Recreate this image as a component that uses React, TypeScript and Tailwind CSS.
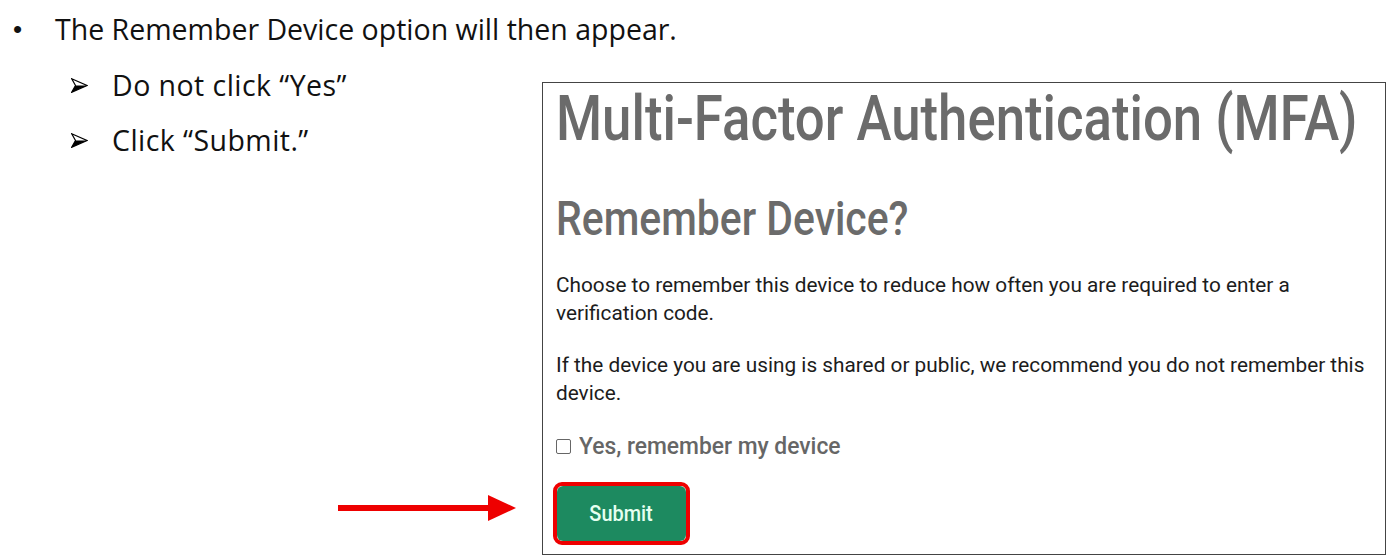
import React from 'react';

function SubArrow() {
  return (
    <svg width="17" height="15" viewBox="0 0 17 15" className="block">
      <polygon points="0.7,0.7 16,7.5 0.7,14.3 4.5,7.5" fill="none" stroke="#000" strokeWidth="1.2" strokeLinejoin="miter" />
      <polygon points="4.5,7.5 16,7.5 0.7,14.3" fill="#000" />
    </svg>
  );
}

export default function App() {
  return (
    <div className="w-[1391px] h-[560px] bg-white overflow-hidden font-['Open_Sans',sans-serif] text-[#111]">
      {/* Main bullet */}
      <div className="flex items-center pt-[12px] h-[46px]">
        <span className="w-[55px] pl-[13px] font-['Liberation_Sans',sans-serif] text-[26px] leading-none">•</span>
        <span className="text-[28.5px] leading-none">The Remember Device option will then appear.</span>
      </div>

      <div className="flex items-start mt-[22px]">
        {/* Left column: sub bullets + arrow */}
        <div className="w-[542px] h-[487px] flex flex-col">
          <div className="flex items-center h-[34px]">
            <span className="w-[112px] pl-[71px]"><SubArrow /></span>
            <span className="text-[28.5px] leading-none tracking-[0.45px]">Do not click “Yes”</span>
          </div>
          <div className="flex items-center h-[34px] mt-[21px]">
            <span className="w-[112px] pl-[71px]"><SubArrow /></span>
            <span className="text-[28.5px] leading-none tracking-[0.45px]">Click “Submit.”</span>
          </div>
          <div className="mt-auto mb-[34px] ml-[338px] flex items-center">
            <div className="w-[152px] h-[6px] bg-[#ee0000]" />
            <svg width="28" height="26" viewBox="0 0 28 26" className="-ml-[2px]">
              <polygon points="0,0 28,13 0,26" fill="#ee0000" />
            </svg>
          </div>
        </div>

        {/* Screenshot box */}
        <div className="mt-[14px] w-[844px] h-[473px] border border-[#444] font-['Roboto',sans-serif] px-[13px]">
          <div className="origin-left scale-x-[0.837] whitespace-nowrap text-[63px] leading-[72px] font-medium text-[#6b6b6b]">
            Multi-Factor Authentication (MFA)
          </div>
          <div className="mt-[38px] origin-left scale-x-[0.852] whitespace-nowrap text-[48px] leading-[52px] font-medium text-[#6b6b6b]">
            Remember Device?
          </div>
          <div className="mt-[26px] origin-left scale-x-[0.99] whitespace-nowrap text-[21px] leading-[28px] text-[#1c1c1c]">
            Choose to remember this device to reduce how often you are required to enter a
            <br />
            verification code.
          </div>
          <div className="mt-[24px] origin-left scale-x-[0.99] whitespace-nowrap text-[21px] leading-[28px] text-[#1c1c1c]">
            If the device you are using is shared or public, we recommend you do not remember this
            <br />
            device.
          </div>
          <div className="mt-[24px] flex items-center gap-[8px]">
            <span className="w-[15px] h-[15px] border border-[#666] rounded-[2px] bg-white" />
            <span className="origin-left scale-x-[0.95] whitespace-nowrap text-[24px] leading-[30px] font-medium text-[#666]">
              Yes, remember my device
            </span>
          </div>
          <div className="mt-[21px] inline-block rounded-[9px] border-[4px] border-[#ee0000] -ml-[3px]">
            <div className="w-[129px] h-[55px] rounded-[6px] bg-[#1d8a60] flex items-center justify-center">
              <span className="origin-center scale-x-[0.905] text-[22px] font-medium text-[#e6fff0]">Submit</span>
            </div>
          </div>
        </div>
      </div>
    </div>
  );
}
